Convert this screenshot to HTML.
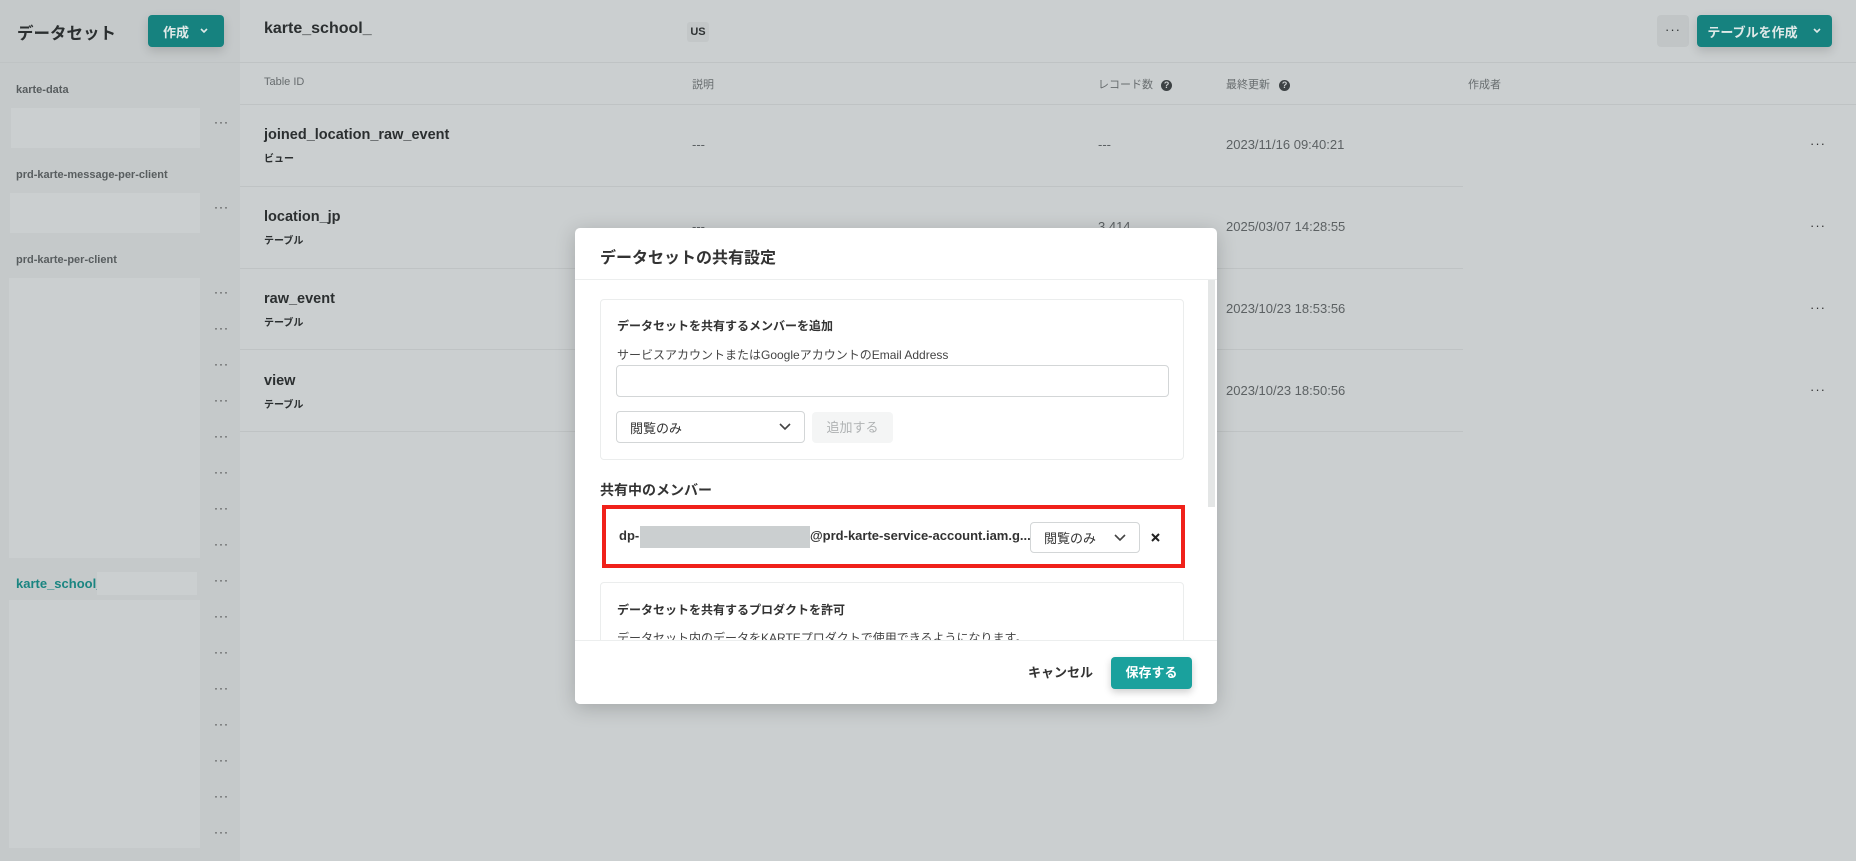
<!DOCTYPE html>
<html><head><meta charset="utf-8"><style>
*{box-sizing:border-box;margin:0;padding:0}
body{width:1856px;height:861px;overflow:hidden;background:#cbcfd0;font-family:"Liberation Sans","Noto Sans CJK JP",sans-serif;color:#2e3233;position:relative}
.a{position:absolute;white-space:nowrap}
.side{position:absolute;left:0;top:0;width:240px;height:861px;background:#c5c9ca}
.box{position:absolute;background:#cbcfd0}
.dots{position:absolute;left:214px;font-size:12px;color:#333;letter-spacing:1px}
.hl{position:absolute;height:1px;background:#bfc3c4}
.btn{position:absolute;background:#16827f;color:#dfe9e8;border-radius:4px;font-weight:bold;font-size:13px;display:flex;align-items:center;justify-content:center;box-shadow:0 4px 10px rgba(0,0,0,.15)}
.rname{font-size:14.5px;font-weight:bold;color:#2b2f30}
.rsub{font-size:10px;font-weight:bold;color:#2b2f30}
.g{font-size:13px;color:#5c6163}
.rd{font-size:13px;letter-spacing:1px;color:#333}
.modal{position:absolute;left:575px;top:228px;width:642px;height:476px;background:#fff;border-radius:5px;box-shadow:0 4px 20px rgba(0,0,0,.2);overflow:hidden}
.card{position:absolute;left:25px;width:584px;border:1px solid #ebeded;border-radius:4px}
.sel{position:absolute;border:1px solid #d3d6d7;border-radius:4px;font-size:13px;color:#333;padding-left:13px;display:flex;align-items:center}
.chev{position:absolute;right:12px;top:50%;margin-top:-6px}
</style></head><body>
<div class="side"></div>
<div class="hl" style="left:0;top:62px;width:1856px"></div>
<div class="a" style="left:17px;top:20px;font-size:16.5px;font-weight:bold;color:#2b2f30">データセット</div>
<div class="btn" style="left:148px;top:15px;width:76px;height:32px">作成 <svg width="10" height="8" style="margin-left:10px" viewBox="0 0 10 8"><path d="M2 2l3 3 3-3" stroke="#dfe9e8" stroke-width="1.6" fill="none"/></svg></div>

<div class="a" style="left:16px;top:84px;font-size:11px;font-weight:bold;color:#585d5f">karte-data</div>
<div class="box" style="left:11px;top:108px;width:189px;height:40px"></div>
<div class="dots" style="top:115px">···</div>
<div class="a" style="left:16px;top:169px;font-size:11px;font-weight:bold;color:#585d5f">prd-karte-message-per-client</div>
<div class="box" style="left:10px;top:193px;width:190px;height:40px"></div>
<div class="dots" style="top:200px">···</div>
<div class="a" style="left:16px;top:254px;font-size:11px;font-weight:bold;color:#585d5f">prd-karte-per-client</div>
<div class="box" style="left:9px;top:278px;width:191px;height:280px"></div>
<div class="dots" style="top:285px">···</div><div class="dots" style="top:321px">···</div><div class="dots" style="top:357px">···</div><div class="dots" style="top:393px">···</div><div class="dots" style="top:429px">···</div><div class="dots" style="top:465px">···</div><div class="dots" style="top:501px">···</div><div class="dots" style="top:537px">···</div>
<div class="a" style="left:16px;top:576px;font-size:13px;font-weight:bold;color:#1a8581">karte_school_</div>
<div class="box" style="left:97px;top:572px;width:100px;height:23px"></div>
<div class="dots" style="top:573px">···</div>
<div class="box" style="left:9px;top:600px;width:191px;height:248px"></div>
<div class="dots" style="top:609px">···</div><div class="dots" style="top:645px">···</div><div class="dots" style="top:681px">···</div><div class="dots" style="top:717px">···</div><div class="dots" style="top:753px">···</div><div class="dots" style="top:789px">···</div><div class="dots" style="top:825px">···</div>

<div class="a" style="left:264px;top:20px;font-size:16px;font-weight:bold;color:#2b2f30">karte_school_</div>
<div class="a" style="left:687px;top:22px;width:22px;height:20px;background:#c3c7c8;border-radius:3px;font-size:11px;font-weight:bold;text-align:center;line-height:20px">US</div>
<div class="a" style="left:1657px;top:15px;width:32px;height:32px;background:#c1c5c6;border-radius:4px;text-align:center;line-height:30px;font-size:13px;letter-spacing:1px">···</div>
<div class="btn" style="left:1697px;top:15px;width:135px;height:32px">テーブルを作成 <svg width="10" height="8" style="margin-left:14px" viewBox="0 0 10 8"><path d="M2 2l3 3 3-3" stroke="#dfe9e8" stroke-width="1.6" fill="none"/></svg></div>

<div class="a" style="left:264px;top:76px;font-size:11px;color:#676c6e">Table ID</div>
<div class="a" style="left:692px;top:76px;font-size:11px;color:#676c6e">説明</div>
<div class="a" style="left:1098px;top:76px;font-size:11px;color:#676c6e">レコード数 <span style="display:inline-block;width:11px;height:11px;border-radius:50%;background:#3d4244;color:#cbcfd0;font-size:9px;text-align:center;line-height:11px;font-weight:bold;margin-left:5px">?</span></div>
<div class="a" style="left:1226px;top:76px;font-size:11px;color:#676c6e">最終更新 <span style="display:inline-block;width:11px;height:11px;border-radius:50%;background:#3d4244;color:#cbcfd0;font-size:9px;text-align:center;line-height:11px;font-weight:bold;margin-left:6px">?</span></div>
<div class="a" style="left:1468px;top:76px;font-size:11px;color:#676c6e">作成者</div>
<div class="hl" style="left:240px;top:104px;width:1616px"></div>
<div class="hl" style="left:240px;top:186px;width:1223px"></div>
<div class="hl" style="left:240px;top:268px;width:1223px"></div>
<div class="hl" style="left:240px;top:349px;width:1223px"></div>
<div class="hl" style="left:240px;top:431px;width:1223px"></div>

<div class="a rname" style="left:264px;top:127px">joined_location_raw_event</div><div class="a rsub" style="left:264px;top:150px">ビュー</div>
<div class="a g" style="left:692px;top:137px">---</div><div class="a g" style="left:1098px;top:137px">---</div><div class="a g" style="left:1226px;top:137px">2023/11/16 09:40:21</div><div class="a rd" style="left:1810px;top:136px">···</div>
<div class="a rname" style="left:264px;top:209px">location_jp</div><div class="a rsub" style="left:264px;top:232px">テーブル</div>
<div class="a g" style="left:692px;top:219px">---</div><div class="a g" style="left:1098px;top:219px">3,414</div><div class="a g" style="left:1226px;top:219px">2025/03/07 14:28:55</div><div class="a rd" style="left:1810px;top:218px">···</div>
<div class="a rname" style="left:264px;top:291px">raw_event</div><div class="a rsub" style="left:264px;top:314px">テーブル</div>
<div class="a g" style="left:1226px;top:301px">2023/10/23 18:53:56</div><div class="a rd" style="left:1810px;top:300px">···</div>
<div class="a rname" style="left:264px;top:373px">view</div><div class="a rsub" style="left:264px;top:396px">テーブル</div>
<div class="a g" style="left:1226px;top:383px">2023/10/23 18:50:56</div><div class="a rd" style="left:1810px;top:382px">···</div>

<div class="modal">
 <div class="a" style="left:25px;top:16px;font-size:16px;font-weight:bold;color:#333">データセットの共有設定</div>
 <div class="hl" style="left:0;top:51px;width:642px;background:#eceeee"></div>
 <div class="a" style="left:633px;top:52px;width:7px;height:227px;background:#e4e6e6"></div>
 <div class="card" style="top:71px;height:161px"></div>
 <div class="a" style="left:42px;top:89px;font-size:12px;font-weight:bold;color:#333">データセットを共有するメンバーを追加</div>
 <div class="a" style="left:42px;top:118px;font-size:12px;color:#444">サービスアカウントまたはGoogleアカウントのEmail Address</div>
 <div class="a" style="left:41px;top:137px;width:553px;height:32px;border:1px solid #d3d6d7;border-radius:4px"></div>
 <div class="sel" style="left:41px;top:183px;width:189px;height:32px">閲覧のみ<svg class="chev" width="14" height="12" viewBox="0 0 14 12"><path d="M2 3l5 5 5-5" stroke="#444" stroke-width="1.6" fill="none"/></svg></div>
 <div class="a" style="left:237px;top:184px;width:81px;height:31px;background:#f4f5f5;border-radius:4px;font-size:13px;color:#b0b3b4;text-align:center;line-height:31px">追加する</div>
 <div class="a" style="left:25px;top:252px;font-size:14px;font-weight:bold;color:#333">共有中のメンバー</div>
 <div class="a" style="left:27px;top:277px;width:583px;height:63px;border:4px solid #f0211a"></div>
 <div class="a" style="left:44px;top:300px;font-size:13px;font-weight:bold;color:#333">dp-</div>
 <div class="a" style="left:65px;top:298px;width:170px;height:22px;background:#cbcfd0"></div>
 <div class="a" style="left:235px;top:300px;font-size:13px;font-weight:bold;color:#333">@prd-karte-service-account.iam.g...</div>
 <div class="sel" style="left:455px;top:294px;width:110px;height:31px">閲覧のみ<svg class="chev" width="14" height="12" viewBox="0 0 14 12"><path d="M2 3l5 5 5-5" stroke="#444" stroke-width="1.6" fill="none"/></svg></div>
 <svg class="a" style="left:575px;top:304px" width="11" height="11" viewBox="0 0 11 11"><path d="M2 2l7 7M9 2l-7 7" stroke="#222" stroke-width="2"/></svg>
 <div class="card" style="top:354px;height:120px"></div>
 <div class="a" style="left:42px;top:373px;font-size:12px;font-weight:bold;color:#333">データセットを共有するプロダクトを許可</div>
 <div class="a" style="left:42px;top:401px;font-size:12px;color:#444">データセット内のデータをKARTEプロダクトで使用できるようになります。</div>
 <div class="a" style="left:0;top:412px;width:642px;height:64px;background:#fff;border-top:1px solid #eceeee"></div>
 <div class="a" style="left:453px;top:434px;font-size:13px;font-weight:bold;color:#333">キャンセル</div>
 <div class="a" style="left:536px;top:429px;width:81px;height:32px;background:#1aa19d;border-radius:4px;color:#fff;font-size:13px;font-weight:bold;text-align:center;line-height:32px;box-shadow:0 3px 8px rgba(0,0,0,.2)">保存する</div>
</div>
</body></html>
